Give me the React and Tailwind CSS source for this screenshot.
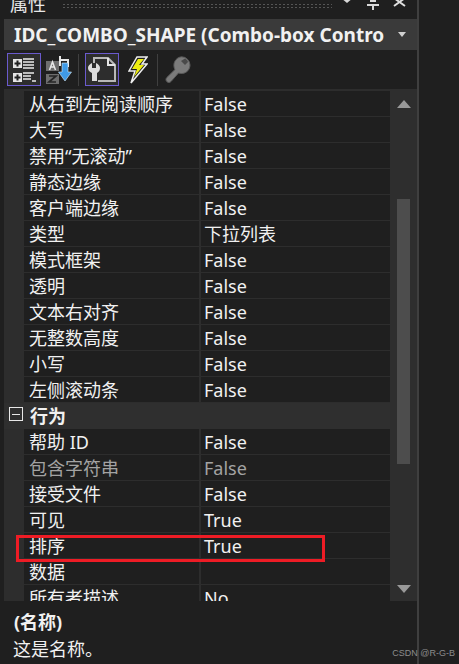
import React from "react";

const FONT = "font-['Noto_Sans','Noto_Sans_CJK_SC',sans-serif]";

const first = [
  ["从右到左阅读顺序", "False"],
  ["大写", "False"],
  ["禁用“无滚动”", "False"],
  ["静态边缘", "False"],
  ["客户端边缘", "False"],
  ["类型", "下拉列表"],
  ["模式框架", "False"],
  ["透明", "False"],
  ["文本右对齐", "False"],
  ["无整数高度", "False"],
  ["小写", "False"],
  ["左侧滚动条", "False"],
];

const second = [
  ["帮助 ID", "False"],
  ["包含字符串", "False", true],
  ["接受文件", "False"],
  ["可见", "True"],
  ["排序", "True"],
  ["数据", ""],
  ["所有者描述", "No"],
];

const Row = ({ name, value, dim }) => (
  <div className={`flex h-[26px] shrink-0 border-b-[1px] border-[#2d2d2d] bg-[#1f1f1f] leading-[27px] ${dim ? "text-[#a3a3a3]" : ""}`}>
    <div className="w-[177px] shrink-0 overflow-hidden whitespace-nowrap border-r-2 border-[#2d2d2d] pl-[5px]">
      {name}
    </div>
    <div className="flex-1 overflow-hidden whitespace-nowrap pl-[3px]">{value}</div>
  </div>
);

const Categorized = () => (
  <svg width="24" height="26" viewBox="0 0 24 26">
    <path d="M1 2h9v9H1zM1 16h9v9H1z" fill="#e4e4e4" />
    <path d="M4.500 3.500h2v2h2v2h-2v2h-2v-2h-2v-2h2zM4.500 17.500h2v2h2v2h-2v2h-2v-2h-2v-2h2z" fill="#1f1f1f" />
    <path d="M11 1h11v2H11zM11 4h11v2H11zM11 7h11v2H11zM11 10h11v2H11zM11 15h11v2H11zM11 18h8v2h-8zM11 21h8v2h-8zM20 23h4v2h-4z" fill="#bcbcbc" />
  </svg>
);

const Alphabetical = () => (
  <svg width="26" height="30" viewBox="0 0 26 30">
    <rect x="0" y="6" width="13" height="10" fill="#6e6e6e" />
    <rect x="0" y="19" width="13" height="10" fill="#6e6e6e" />
    <path d="M3.500 15l3-8 3 8M4.500 12h4" fill="none" stroke="#e6e6e6" strokeWidth="1.500" />
    <path d="M3 21h7l-7 6h7" fill="none" stroke="#262626" strokeWidth="1.700" />
    <path d="M13 1h2v3h8v8h-2V6h-6v5h-2z" fill="#e8e8e8" />
    <path d="M16 8h6v9h3.500L19 26l-6.500-9H16z" fill="#3f9ae6" stroke="#d8ecfa" strokeWidth="0.600" />
  </svg>
);

const Properties = () => (
  <svg width="30" height="26" viewBox="0 0 30 26">
    <path d="M7 6V1h14l7 7v16H11" fill="none" stroke="#b8b8b8" strokeWidth="2" />
    <path d="M21 1v7h7" fill="none" stroke="#e4e4e4" strokeWidth="2" />
    <path d="M1 11c0-2 1.500-4 4-5v5h4V6c2.500 1 4 3 4 5s-1 4-3 5v8H5v-8c-2.500-1-4-3-4-5z" fill="#dcdcdc" />
  </svg>
);

const Bolt = () => (
  <svg width="20" height="28" viewBox="0 0 20 28">
    <path d="M9 1h10l-5 7h5L3 27l4-12H1z" fill="#1f1f1f" stroke="#efefef" strokeWidth="1.500" />
    <path d="M10 3h6l-5 6h5L6 21l3-8H4z" fill="#eeee11" />
  </svg>
);

const Wrench = () => (
  <svg width="26" height="28" viewBox="0 0 26 28">
    <path d="M25 9a8.500 8.500 0 0 1-11.500 8L6 25.500c-1.200 1.300-3 1.300-4.200.1-1.100-1.100-1.100-2.900 0-4L10 13.500A8.500 8.500 0 0 1 16.500.800 8.500 8.500 0 0 1 25 9z" fill="#7b7b7b" stroke="#5a5a5a" />
    <path d="M16 5l4-2.500c1.500.8 2.500 2 3 3.500l-3 3z" fill="#4a4a4a" />
  </svg>
);

export default function App() {
  return (
    <div className={`relative flex h-[664px] w-[459px] overflow-hidden bg-[#1f1f1f] text-[18px] text-[#f1f1f1] ${FONT}`}>
      <div className="flex w-[419px] shrink-0 flex-col border-r-2 border-[#3f3f3f] pl-[4px]">
        {/* title bar */}
        <div className="flex h-[19px] shrink-0 items-center">
          <span className="-mt-[10px] ml-[6px] w-[48px] text-[#e8e8e8]">属性</span>
          <div className="mb-[8px] ml-[4px] h-[5px] w-[270px] bg-[radial-gradient(#555_1px,transparent_1px)] bg-[length:4px_3px]" />
          <svg className="-mt-[12px] ml-[8px]" width="70" height="12" viewBox="0 0 70 12">
            <path d="M1 0h12L7 5z" fill="#d8d8d8" />
            <path d="M29 0h8M30 3h6M27 7h12M33 7v5" fill="none" stroke="#d8d8d8" strokeWidth="2" />
            <path d="M54 0l11 8M65 0L54 8" stroke="#e0e0e0" strokeWidth="2" />
          </svg>
        </div>

        {/* object combo */}
        <div className="flex h-[31px] w-[413px] shrink-0 items-center justify-between bg-[#3a3a3a] pl-[10px] pr-[11px] text-[19px] font-bold">
          <span className="whitespace-nowrap leading-[28px]">IDC_COMBO_SHAPE (Combo-box Contro</span>
          <svg width="8" height="5" viewBox="0 0 8 5"><path d="M0 0h8L4 5z" fill="#d0d0d0" /></svg>
        </div>

        {/* toolbar */}
        <div className="flex h-[39px] shrink-0 items-center pl-[3px]">
          <div className="flex h-[33px] w-[34px] items-center justify-center border-[1px] border-[#6a5acd] bg-[#2d2d2d]"><Categorized /></div>
          <div className="ml-[5px] flex w-[26px] justify-center"><Alphabetical /></div>
          <div className="mx-[6px] h-[32px] w-[1px] bg-[#3f3f3f]" />
          <div className="flex h-[33px] w-[34px] items-center justify-center border-[1px] border-[#6a5acd] bg-[#2d2d2d]"><Properties /></div>
          <div className="ml-[9px] flex w-[20px] justify-center"><Bolt /></div>
          <div className="ml-[9px] mr-[7px] h-[32px] w-[1px] bg-[#3f3f3f]" />
          <Wrench />
        </div>

        {/* property grid */}
        <div className="flex h-[512px] shrink-0 bg-[#2d2d2d]">
          <div className="flex min-w-0 flex-1 flex-col overflow-hidden pl-[20px] pt-[2px]">
            {first.map(([n, v]) => (
              <Row key={n} name={n} value={v} />
            ))}
            <div className="-ml-[20px] flex h-[26px] shrink-0 items-center bg-[#2f2f2f] pl-[5px] font-bold">
              <div className="-mt-[4px] flex h-[14px] w-[14px] items-center justify-center border-[1px] border-[#e8e8e8]">
                <div className="h-[1px] w-[8px] bg-[#e8e8e8]" />
              </div>
              <span className="ml-[7px]">行为</span>
            </div>
            {second.map(([n, v, d]) => (
              <Row key={n} name={n} value={v} dim={d} />
            ))}
          </div>
          {/* scrollbar */}
          <div className="flex w-[27px] shrink-0 flex-col items-center bg-[#2e2e2e] pt-[11px]">
            <svg width="14" height="8" viewBox="0 0 14 8"><path d="M0 8L7 0l7 8z" fill="#999" /></svg>
            <div className="mt-[91px] h-[265px] w-[13px] bg-[#4d4d4d]" />
            <svg className="mt-[121px]" width="14" height="8" viewBox="0 0 14 8"><path d="M0 0h14L7 8z" fill="#999" /></svg>
          </div>
        </div>

        {/* description */}
        <div className="flex-1 pl-[9px] pt-[8px] leading-[27px]">
          <div className="ml-[1px] font-bold">(名称)</div>
          <div>这是名称。</div>
        </div>
      </div>

      {/* annotation */}
      <div className="absolute left-[16px] top-[535px] h-[27px] w-[309px] border-[3px] border-[#ee1c25]" />
      <span className="absolute right-[4px] bottom-[5px] font-['Liberation_Sans',sans-serif] text-[9px] leading-[11px] text-[#8c8c8c]">CSDN @R-G-B</span>
    </div>
  );
}
